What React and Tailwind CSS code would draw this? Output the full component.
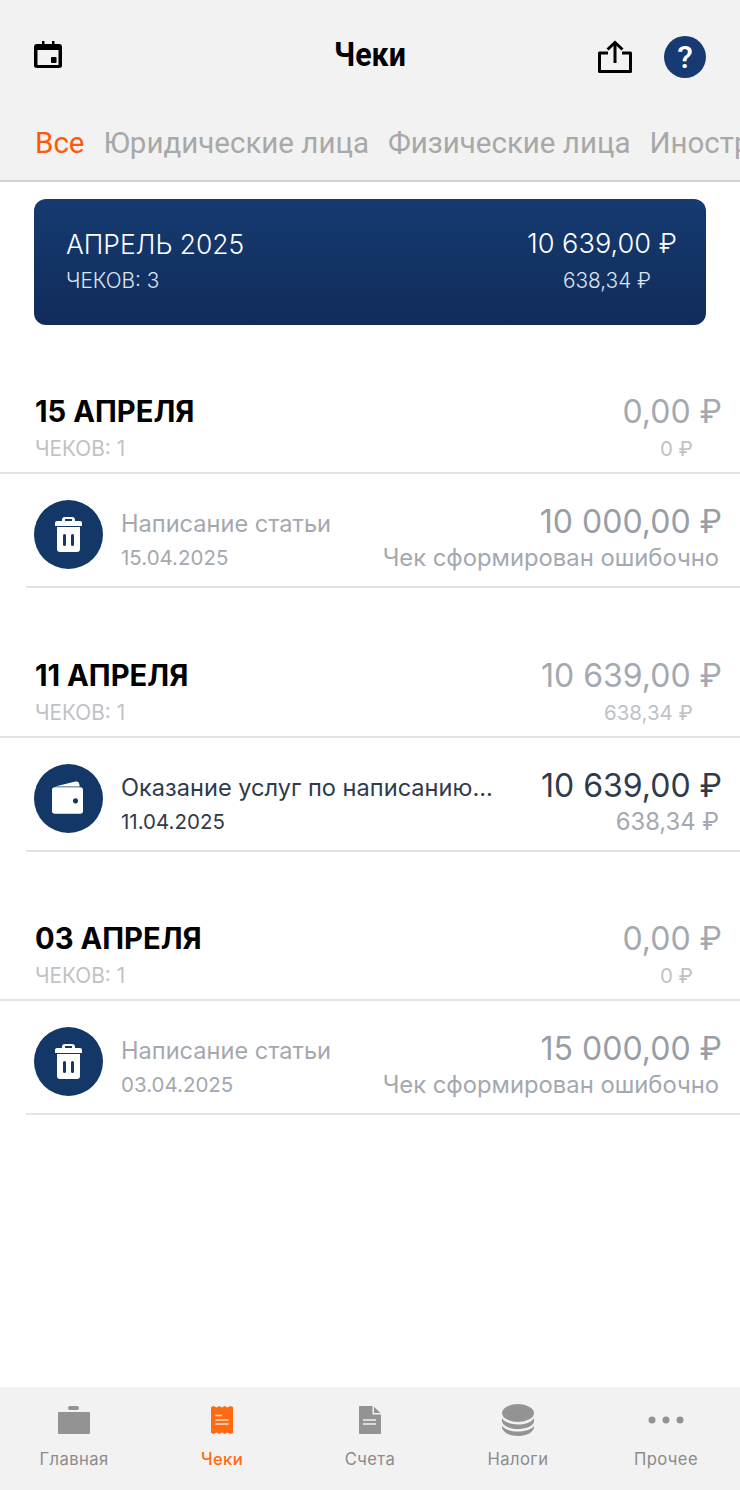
const inter = "font-['Inter','Noto_Sans',sans-serif]";

function Trash() {
  return (
    <svg width="27" height="35" viewBox="0 0 27 35" fill="#fff">
      <path fillRule="evenodd" d="M7 3 Q7 0 10 0 H17 Q20 0 20 3 V4 H25 Q27 4 27 6 V9 H0 V6 Q0 4 2 4 H7 Z M10 2 V4 H17 V2 Z" />
      <path fillRule="evenodd" d="M2 10 H25 V32 Q25 35 22 35 H5 Q2 35 2 32 Z M9.5 17 Q8 17 8 18.5 V27.5 Q8 29 9.5 29 Q11 29 11 27.5 V18.5 Q11 17 9.5 17 Z M17.5 17 Q16 17 16 18.5 V27.5 Q16 29 17.5 29 Q19 29 19 27.5 V18.5 Q19 17 17.5 17 Z" />
    </svg>
  );
}

function Wallet() {
  return (
    <svg width="31" height="33" viewBox="0 0 31 33" fill="#fff" className="-ml-[2px] -mt-[1px]">
      <path d="M3 5.6 L23.5 0.6 Q26.6 0 27.2 2.8 L27.8 5.6 Z" />
      <path fillRule="evenodd" d="M0 9 Q0 6.3 2.7 6.3 H28.3 Q31 6.3 31 9 V30 Q31 32.7 28.3 32.7 H2.7 Q0 32.7 0 30 Z M23.5 17.3 a2.6 2.6 0 1 0 0.01 0 Z" />
    </svg>
  );
}

function Calendar() {
  return (
    <svg width="28" height="27" viewBox="0 0 28 27" className="block -mt-[6px] ml-[1px]">
      <path fill="#000" d="M8 0 H10.5 V3 H18 V0 H20.5 V3 H25 Q28 3 28 6 V24.5 Q28 27 25 27 H3 Q0 27 0 24.5 V6 Q0 3 3 3 H8 Z" />
      <rect x="3.5" y="9" width="21" height="15" fill="#f2f2f2" />
      <rect x="17" y="16" width="5.5" height="6" rx="0.8" fill="#000" />
    </svg>
  );
}

function Share() {
  return (
    <svg width="36" height="34" viewBox="0 0 36 34" fill="none" stroke="#000" strokeWidth="3">
      <path d="M11 13 H2.5 V31.5 H33.5 V13 H25" strokeLinejoin="round" />
      <path d="M18 23 V2.5" />
      <path d="M10.5 9.5 L18 2.5 L25.5 9.5" />
    </svg>
  );
}

function Group({ title, total, tax, date, name, amount, sub, active }) {
  return (
    <section className="h-[263.5px] pt-[60px]">
      <div className="h-[89px] border-b-2 border-[#e3e4e6] pl-[35px] pr-[18px] pt-[10px] flex justify-between">
        <div>
          <div className="text-[29.2px] leading-[34px] font-bold text-black">{title}</div>
          <div className="text-[20.8px] leading-[24px] mt-[8px] text-[#bfc2c7]">ЧЕКОВ: 1</div>
        </div>
        <div className="flex flex-col items-end">
          <div className="text-[32px] leading-[34px] text-[#a4a8b0]">{total}</div>
          <div className="text-[20.5px] leading-[24px] mt-[8px] text-[#bfc2c7] pr-[29px]">{tax}</div>
        </div>
      </div>
      <div className="ml-[26px] h-[114px] border-b-2 border-[#e3e4e6] pl-[8px] pr-[18px] flex items-start pt-[26px]">
        <div className="w-[69px] h-[69px] rounded-full bg-[#133767] flex items-center justify-center shrink-0">
          {active ? <Wallet /> : <Trash />}
        </div>
        <div className="ml-[18px] flex-1 min-w-0 pt-[10px]">
          <div className={`text-[23.6px] leading-[28px] whitespace-nowrap ${active ? "text-[#2f3a4d]" : "text-[#a4a8b0]"}`}>{name}</div>
          <div className={`text-[20.5px] leading-[24px] mt-[8px] ${active ? "text-[#2f3a4d]" : "text-[#a4a8b0]"}`}>{date}</div>
        </div>
        <div className="flex flex-col items-end shrink-0">
          <div className={`text-[32px] leading-[34px] mt-[5px] ${active ? "text-[#2f3a4d]" : "text-[#989da6]"}`}>{amount}</div>
          <div className="text-[23.8px] leading-[28px] mt-[5px] text-[#a4a8b0] pr-[3px]">{sub}</div>
        </div>
      </div>
    </section>
  );
}

function NavItem({ label, icon, active }) {
  return (
    <div className="flex-1 flex flex-col items-center">
      <div className="h-[36px] flex items-center justify-center">{icon}</div>
      <div className={`text-[16.6px] leading-[20px] mt-[11px] tracking-[0.4px] ${active ? "text-[#ff6a13] font-medium" : "text-[#8b8b8b]"}`}>{label}</div>
    </div>
  );
}

export default function App() {
  return (
    <div className={`w-[740px] h-[1490px] bg-white flex flex-col overflow-hidden ${inter}`}>
      <header className="h-[182px] shrink-0 bg-[#f2f2f2] border-b-2 border-[#d2d2d2] flex flex-col overflow-hidden">
        <div className="relative h-[70px] mt-[22px] flex items-center justify-between pl-[33px] pr-[34px]">
          <Calendar />
          <div className="absolute left-0 right-0 top-[14px] text-center font-['Roboto',sans-serif] font-bold text-[33px] leading-[38px] text-black">
            <span className="inline-block scale-x-[0.92]">Чеки</span>
          </div>
          <div className="flex items-center gap-[31px]">
            <Share />
            <div className="w-[42px] h-[42px] rounded-full bg-[#173a73] flex items-center justify-center text-white font-['Roboto',sans-serif] font-medium text-[32px] leading-none">?</div>
          </div>
        </div>
        <div className="mt-[31px] pl-[35px] flex gap-[19px] text-[29.5px] leading-[40px] whitespace-nowrap font-['Roboto',sans-serif] text-[#a8a8a8]">
          <span className="text-[#ff5a0a]">Все</span>
          <span>Юридические лица</span>
          <span>Физические лица</span>
          <span>Иностр</span>
        </div>
      </header>

      <main className="flex-1 min-h-0">
        <div className="mx-[34px] mt-[17px] h-[126px] rounded-[12px] bg-gradient-to-b from-[#153b70] to-[#112b5b] pl-[32px] pr-[29px] pt-[28px] flex justify-between text-white">
          <div>
            <div className="text-[26.4px] leading-[34px] font-light">АПРЕЛЬ 2025</div>
            <div className="text-[20.8px] leading-[24px] mt-[8px] font-light text-[#dfe5ee]">ЧЕКОВ: 3</div>
          </div>
          <div className="flex flex-col items-end">
            <div className="text-[27.2px] leading-[34px] font-light">10 639,00 ₽</div>
            <div className="text-[20.8px] leading-[24px] mt-[8px] font-light text-[#dfe5ee] pr-[26px]">638,34 ₽</div>
          </div>
        </div>
        <Group title="15 АПРЕЛЯ" total="0,00 ₽" tax="0 ₽" name="Написание статьи" date="15.04.2025" amount="10 000,00 ₽" sub="Чек сформирован ошибочно" />
        <Group title="11 АПРЕЛЯ" total="10 639,00 ₽" tax="638,34 ₽" name="Оказание услуг по написанию..." date="11.04.2025" amount="10 639,00 ₽" sub="638,34 ₽" active />
        <Group title="03 АПРЕЛЯ" total="0,00 ₽" tax="0 ₽" name="Написание статьи" date="03.04.2025" amount="15 000,00 ₽" sub="Чек сформирован ошибочно" />
      </main>

      <nav className="h-[103px] shrink-0 bg-[#f2f2f2] flex pt-[15px] px-0">
        <NavItem label="Главная" icon={
          <svg width="32" height="28" viewBox="0 0 32 28" fill="#939393"><rect x="10" y="0" width="11" height="4" rx="2" /><rect x="0" y="6" width="32" height="22" rx="1" /></svg>
        } />
        <NavItem active label="Чеки" icon={
          <svg width="22" height="28" viewBox="0 0 22 28"><path fill="#ff6a13" d="M0 1 L2.75 0 L5.5 1.5 L8.25 0 L11 1.5 L13.75 0 L16.5 1.5 L19.25 0 L22 1 V27 L19.25 28 L16.5 26.5 L13.75 28 L11 26.5 L8.25 28 L5.5 26.5 L2.75 28 L0 27 Z" /><path stroke="#ffe3d0" strokeWidth="1.4" d="M4.5 9.5 H11 M4.5 14 H17.5 M4.5 18 H17.5" /></svg>
        } />
        <NavItem label="Счета" icon={
          <svg width="22" height="28" viewBox="0 0 22 28" fill="#939393"><path d="M1 0 H13.5 V8.5 H22 V27 Q22 28 21 28 H1 Q0 28 0 27 V1 Q0 0 1 0 Z" /><path d="M15 0.8 L21.5 7 H15 Z" /><path stroke="#f2f2f2" strokeWidth="1.4" d="M4 14 H17 M4 18 H17" fill="none" /></svg>
        } />
        <NavItem label="Налоги" icon={
          <svg width="32" height="32" viewBox="0 0 32 32" fill="#939393"><ellipse cx="16" cy="9" rx="16" ry="9" /><path d="M0 14 C3 19 10 20.5 16 20.5 S29 19 32 14 V18 C30 23 22 25 16 25 S2 23 0 18 Z" /><path d="M0 22 C3 26 10 27.5 16 27.5 S29 26 32 22 V24 C30 30 22 32 16 32 S2 30 0 24 Z" /></svg>
        } />
        <NavItem label="Прочее" icon={
          <svg width="36" height="8" viewBox="0 0 36 8" fill="#939393"><circle cx="4" cy="4" r="3.5" /><circle cx="18" cy="4" r="3.5" /><circle cx="32" cy="4" r="3.5" /></svg>
        } />
      </nav>
    </div>
  );
}
